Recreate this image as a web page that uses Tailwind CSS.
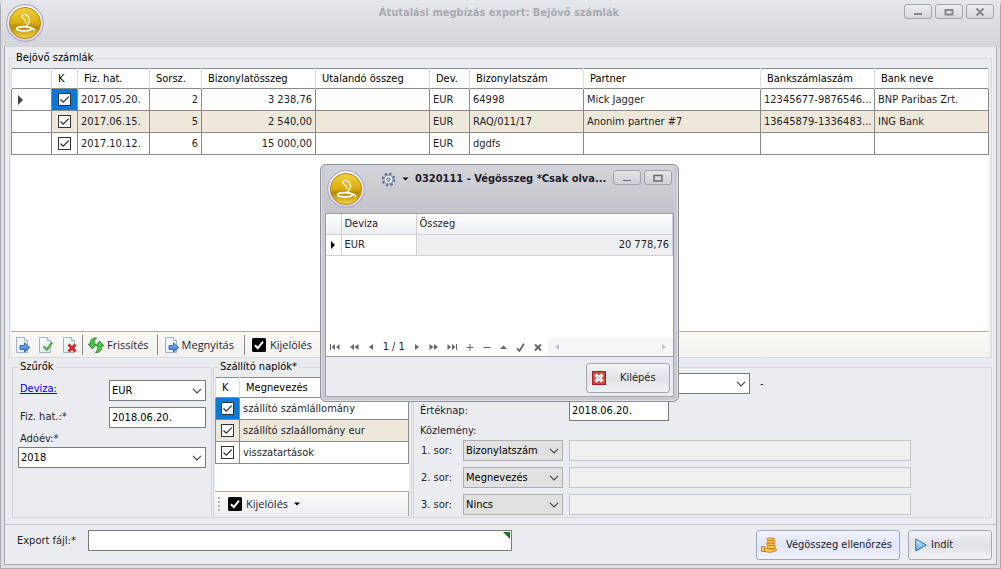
<!DOCTYPE html>
<html lang="hu">
<head>
<meta charset="utf-8">
<title>Átutalási megbízás export: Bejövő számlák</title>
<script src="https://cdn.jsdelivr.net/npm/@tailwindcss/browser@4"></script>
</head>
<body class="min-h-screen bg-[#d9dae0] font-['DejaVu_Sans_Condensed','DejaVu_Sans',sans-serif] text-[11px] leading-[14px] text-[#1e1e2c]">

<svg class="absolute size-0" aria-hidden="true">
  <defs>
    <linearGradient id="gold" x1="0" y1="0" x2="0" y2="1"><stop offset="0" stop-color="#f3cf3c"/><stop offset=".5" stop-color="#dcae0e"/><stop offset=".62" stop-color="#b58a00"/><stop offset="1" stop-color="#f2d54a"/></linearGradient>
    <linearGradient id="ring" x1="0" y1="0" x2="0" y2="1"><stop offset="0" stop-color="#ffffff"/><stop offset="1" stop-color="#d9d2e8"/></linearGradient>
    <linearGradient id="blue" x1="0" y1="0" x2="0" y2="1"><stop offset="0" stop-color="#8fc0f5"/><stop offset="1" stop-color="#2f6fc8"/></linearGradient>
    <linearGradient id="page" x1="0" y1="0" x2="1" y2="1"><stop offset="0" stop-color="#ffffff"/><stop offset="1" stop-color="#d8e2ee"/></linearGradient>
    <linearGradient id="sky" x1="0" y1="0" x2="0" y2="1"><stop offset="0" stop-color="#d3ecfc"/><stop offset="1" stop-color="#5aa9e6"/></linearGradient>
  </defs>
  <symbol id="logo" viewBox="0 0 38 38">
    <circle cx="19" cy="19" r="18.3" fill="url(#ring)" stroke="#b3a8cc" stroke-width="1.2"/>
    <circle cx="19" cy="19" r="15.6" fill="url(#gold)" stroke="#b08c14" stroke-width="1"/>
    <g fill="none" stroke="#fff" stroke-linecap="round"><path d="M19.500 22.500C24 19.500 24 16 22.500 13C20.500 9.500 16.500 9.500 15.500 12.500C17 15 20 15 20 19" stroke-width="1.100"/><ellipse cx="18" cy="24.800" rx="7.500" ry="2.200" stroke-width="1.600"/><path d="M25 24c2 0 3 .8 3.500 2.600" stroke-width="1.400"/></g>
  </symbol>
  <symbol id="tick" viewBox="0 0 13 13"><path d="M2.500 6.500 5.200 9.200 10.800 3.600" fill="none" stroke="#333" stroke-width="1.300"/></symbol>
  <symbol id="chev" viewBox="0 0 10 6"><path d="M1 .8 5 4.800 9 .8" fill="none" stroke="#444" stroke-width="1.200"/></symbol>
  <symbol id="doc" viewBox="0 0 16 16"><path d="M1.500.5h8l3 3v12h-11z" fill="url(#page)" stroke="#9fb0c4"/><path d="M9.500.5v3h3" fill="#fff" stroke="#9fb0c4"/></symbol>
  <symbol id="docopen" viewBox="0 0 16 16"><use href="#doc"/><path d="M5 8.500h4.500V5.800L14.800 10.500 9.500 15v-2.600H5z" fill="url(#blue)" stroke="#2458a8" stroke-width=".8"/></symbol>
  <symbol id="doccheck" viewBox="0 0 16 16"><use href="#doc"/><path d="M5.500 9.500 8.800 12.500 14.300 5.500" fill="none" stroke="#58b04c" stroke-width="2.400"/></symbol>
  <symbol id="docdel" viewBox="0 0 16 16"><use href="#doc"/><path d="M6.500 7.500l7 7M13.500 7.500l-7 7" stroke="#d02c2c" stroke-width="3"/></symbol>
  <symbol id="refresh" viewBox="0 0 16 16"><g fill="#4cc44a" stroke="#16801e" stroke-width=".8"><path d="M8.500 1C4.500.5 2 3 2.200 7H.3L4.300 12 8.300 7H6C6 4.500 6.800 2.500 8.500 1z"/><path d="M7.500 15.500c4 .5 6.500-2 6.300-6.500h1.900L11.700 4 7.700 9H10c0 2.500-.8 5-2.500 6.500z"/></g></symbol>
  <symbol id="blackcheck" viewBox="0 0 14 14"><rect width="14" height="14" rx="1.500"/><path d="M3 7.200 5.800 10.200 11 3.600" fill="none" stroke="#fff" stroke-width="2"/></symbol>
  <symbol id="caret" viewBox="0 0 6 4"><path d="M0 .5h6L3 3.500z"/></symbol>
</svg>

<div class="flex min-h-screen flex-col rounded-t-md border-x border-b border-[#a9aab2] bg-[#dddee3]">
  <header class="flex h-[47px] items-start bg-linear-to-b from-[#e6e7ea] to-[#d4d5da] pt-1 pr-1.5 pl-[5px]">
    <svg class="size-[38px] shrink-0"><use href="#logo"/></svg>
    <h1 class="grow pt-0.5 pl-[50px] text-center text-[11px] font-bold text-[#a9aab1]">Átutalási megbízás export: Bejövő számlák</h1>
    <div class="flex gap-[3px]">
      <button aria-label="Kis méret" class="flex h-[15px] w-7 items-center justify-center rounded-[3px] border border-[#a4a5ae] bg-linear-to-b from-[#ededf0] to-[#d8d9de]"><svg class="h-2 w-2.5" viewBox="0 0 10 8"><path d="M1 6h8" stroke="#85868c" stroke-width="2"/></svg></button>
      <button aria-label="Teljes méret" class="flex h-[15px] w-7 items-center justify-center rounded-[3px] border border-[#a4a5ae] bg-linear-to-b from-[#ededf0] to-[#d8d9de]"><svg class="h-2 w-2.5" viewBox="0 0 10 8"><path d="M1.500 2h7v4.500h-7z" fill="none" stroke="#85868c" stroke-width="2"/></svg></button>
      <button aria-label="Bezárás" class="flex h-[15px] w-7 items-center justify-center rounded-[3px] border border-[#a4a5ae] bg-linear-to-b from-[#ededf0] to-[#d8d9de]"><svg class="h-2 w-2.5" viewBox="0 0 10 8"><path d="M1.500.5l7 7M8.500.5l-7 7" stroke="#85868c" stroke-width="2"/></svg></button>
    </div>
  </header>

  <main class="mr-[3px] mb-[3px] ml-[3px] flex grow flex-col border-x border-b border-[#a9aab2] bg-[#ebecf0] pt-[11px]">
    <section class="mx-1 flex grow flex-col border border-[#d9dade]">
      <h2 class="-mt-2 ml-1 self-start bg-[#ebecf0] px-0.5 text-black">Bejövő számlák</h2>
      <div class="mt-[3px] mr-0.5 ml-px flex grow flex-col bg-white">
        <table class="w-full table-fixed border-collapse border-y border-[#8a8a8a]">
          <colgroup><col class="w-10"><col class="w-[26px]"><col class="w-[72px]"><col class="w-[52px]"><col class="w-[114px]"><col class="w-[114px]"><col class="w-10"><col class="w-[114px]"><col class="w-[177px]"><col class="w-[114px]"><col></colgroup>
          <thead>
            <tr class="h-5 text-left text-black *:border-x *:border-[#dcdcdc] *:px-1.5 *:font-normal *:whitespace-nowrap">
              <td></td><th>K</th><th>Fiz. hat.</th><th>Sorsz.</th><th>Bizonylatösszeg</th><th>Utalandó összeg</th><th>Dev.</th><th>Bizonylatszám</th><th>Partner</th><th>Bankszámlaszám</th><th>Bank neve</th>
            </tr>
          </thead>
          <tbody>
            <tr class="h-[22px] *:border *:border-[#8a8a8a] *:px-[3px] *:whitespace-nowrap">
              <td><svg class="ml-[3px] h-2.5 w-[5px]" viewBox="0 0 5 10"><path d="M0 0 5 5 0 10z" fill="#444"/></svg></td>
              <td class="bg-[#0a78d4]"><label class="mx-auto grid size-[13px]"><input type="checkbox" checked aria-label="64998 kijelölése" class="col-start-1 row-start-1 size-[13px] appearance-none border border-[#333] bg-white"><svg class="col-start-1 row-start-1 size-[13px]"><use href="#tick"/></svg></label></td>
              <td>2017.05.20.</td><td class="text-right">2</td><td class="text-right">3 238,76</td><td></td><td>EUR</td><td>64998</td><td>Mick Jagger</td><td>12345677-9876546...</td><td>BNP Paribas Zrt.</td>
            </tr>
            <tr class="h-[22px] bg-[#ede8d9] *:border *:border-[#8a8a8a] *:px-[3px] *:whitespace-nowrap">
              <td class="bg-white"></td>
              <td><label class="mx-auto grid size-[13px]"><input type="checkbox" checked aria-label="RAQ/011/17 kijelölése" class="col-start-1 row-start-1 size-[13px] appearance-none border border-[#333] bg-white"><svg class="col-start-1 row-start-1 size-[13px]"><use href="#tick"/></svg></label></td>
              <td>2017.06.15.</td><td class="text-right">5</td><td class="text-right">2 540,00</td><td></td><td>EUR</td><td>RAQ/011/17</td><td>Anonim partner #7</td><td>13645879-1336483...</td><td>ING Bank</td>
            </tr>
            <tr class="h-[22px] *:border *:border-[#8a8a8a] *:px-[3px] *:whitespace-nowrap">
              <td></td>
              <td><label class="mx-auto grid size-[13px]"><input type="checkbox" checked aria-label="dgdfs kijelölése" class="col-start-1 row-start-1 size-[13px] appearance-none border border-[#333] bg-white"><svg class="col-start-1 row-start-1 size-[13px]"><use href="#tick"/></svg></label></td>
              <td>2017.10.12.</td><td class="text-right">6</td><td class="text-right">15 000,00</td><td></td><td>EUR</td><td>dgdfs</td><td></td><td></td><td></td>
            </tr>
          </tbody>
        </table>
      </div>
      <div class="mr-0.5 ml-px flex h-[26px] items-center border-t border-[#b3ad98] bg-linear-to-b from-[#faf9f5] to-[#f3f2f0] pl-1 font-['Open_Sans','Noto_Sans',sans-serif] text-[11px] text-[#1e1e3c]">
        <button aria-label="Megnyitás" class="mr-[7px]"><svg class="size-4"><use href="#docopen"/></svg></button>
        <button aria-label="Elfogadás" class="mr-2"><svg class="size-4"><use href="#doccheck"/></svg></button>
        <button aria-label="Törlés" class="mr-1"><svg class="size-4"><use href="#docdel"/></svg></button>
        <button class="flex h-5 items-center gap-[3px] border-l border-[#8a8a8a] pr-2 pl-[5px]"><svg class="size-4"><use href="#refresh"/></svg>Frissítés</button>
        <button class="flex h-5 items-center gap-0.5 border-l border-[#8a8a8a] pr-2.5 pl-1.5"><svg class="size-4"><use href="#docopen"/></svg>Megnyitás</button>
        <button class="flex h-5 items-center gap-1 border-l border-[#8a8a8a] pl-[7px]"><svg class="size-3.5"><use href="#blackcheck"/></svg>Kijelölés<svg class="ml-1 h-1 w-1.5"><use href="#caret"/></svg></button>
      </div>
    </section>

    <div class="mx-1 mt-0.5 mb-1.5 flex h-[158px] gap-px pl-[3px]">
      <fieldset class="w-[200px] shrink-0 border border-[#d6d7dc] px-[5px]">
        <legend class="px-0.5 text-black">Szűrők</legend>
        <div class="mt-1.5 grid grid-cols-[91px_1fr] gap-y-1.5">
          <a href="#deviza" class="pt-0.5 pl-0.5 text-[#0000e0] underline">Deviza:</a>
          <div class="relative"><select id="deviza" aria-label="Deviza" class="h-[21px] w-full appearance-none border border-[#7a7a7a] bg-white px-0.5 text-black"><option>EUR</option></select><svg class="pointer-events-none absolute top-2 right-1 h-1.5 w-2.5"><use href="#chev"/></svg></div>
          <label for="fizhat" class="pt-[3px] pl-0.5">Fiz. hat.:*</label>
          <input id="fizhat" value="2018.06.20." class="h-[21px] w-full border border-[#7a7a7a] bg-white px-0.5 text-black">
        </div>
        <label for="adoev" class="mt-1 mb-px block pl-0.5">Adóév:*</label>
        <div class="relative"><select id="adoev" class="h-[21px] w-full appearance-none border border-[#7a7a7a] bg-white px-0.5 text-black"><option>2018</option></select><svg class="pointer-events-none absolute top-2 right-1 h-1.5 w-2.5"><use href="#chev"/></svg></div>
      </fieldset>

      <fieldset class="w-[199px] shrink-0 border border-[#d6d7dc] pr-0.5 pl-px">
        <legend class="ml-[3px] px-0.5 text-black">Szállító naplók*</legend>
        <div class="mt-[3px] h-[114px] bg-white">
          <table class="w-full table-fixed border-collapse border border-[#8a8a8a]">
            <colgroup><col class="w-6"><col></colgroup>
            <thead><tr class="h-5 text-left text-black *:border-x *:border-[#dcdcdc] *:px-1.5 *:font-normal"><th>K</th><th>Megnevezés</th></tr></thead>
            <tbody>
              <tr class="h-[22px] *:border *:border-[#8a8a8a] *:px-[3px]"><td class="bg-[#0a78d4]"><label class="mx-auto grid size-[13px]"><input type="checkbox" checked aria-label="szállító számlállomány" class="col-start-1 row-start-1 size-[13px] appearance-none border border-[#333] bg-white"><svg class="col-start-1 row-start-1 size-[13px]"><use href="#tick"/></svg></label></td><td>szállító számlállomány</td></tr>
              <tr class="h-[22px] bg-[#ede8d9] *:border *:border-[#8a8a8a] *:px-[3px]"><td><label class="mx-auto grid size-[13px]"><input type="checkbox" checked aria-label="szállító szlaállomány eur" class="col-start-1 row-start-1 size-[13px] appearance-none border border-[#333] bg-white"><svg class="col-start-1 row-start-1 size-[13px]"><use href="#tick"/></svg></label></td><td>szállító szlaállomány eur</td></tr>
              <tr class="h-[22px] *:border *:border-[#8a8a8a] *:px-[3px]"><td><label class="mx-auto grid size-[13px]"><input type="checkbox" checked aria-label="visszatartások" class="col-start-1 row-start-1 size-[13px] appearance-none border border-[#333] bg-white"><svg class="col-start-1 row-start-1 size-[13px]"><use href="#tick"/></svg></label></td><td>visszatartások</td></tr>
            </tbody>
          </table>
        </div>
        <div class="flex h-[25px] items-center border-t border-r border-[#b3ad98] border-r-[#a4a5ae] bg-linear-to-b from-[#fbfbfb] to-[#eeeff1] pl-[3px] font-['Open_Sans','Noto_Sans',sans-serif] text-[11px] text-[#1e1e3c]">
          <span class="mr-2 h-3.5 border-l-2 border-dotted border-[#b4b4b8]"></span>
          <button class="flex items-center gap-1"><svg class="size-3.5"><use href="#blackcheck"/></svg>Kijelölés<svg class="ml-0.5 h-1 w-1.5"><use href="#caret"/></svg></button>
        </div>
      </fieldset>

      <div role="group" aria-label="Utalás" class="mt-[7px] grow border border-[#d6d7dc] pt-[5px] pr-20 pl-1.5">
        <div class="grid grid-cols-[37px_100px_1fr] items-center gap-x-1.5 gap-y-1.5">
          <span class="col-span-2"></span>
          <div class="flex items-center gap-2.5"><div class="relative w-[181px]"><select aria-label="Bankszámla" class="h-[21px] w-full appearance-none border border-[#7a7a7a] bg-white px-1"><option></option></select><svg class="pointer-events-none absolute top-2 right-1 h-1.5 w-2.5"><use href="#chev"/></svg></div><span>-</span></div>
          <label for="erteknap" class="col-span-2">Értéknap:</label>
          <input id="erteknap" value="2018.06.20." class="h-[21px] w-[100px] border border-[#7a7a7a] bg-white px-0.5 text-black">
        </div>
        <div class="mt-[3px]">Közlemény:</div>
        <div class="mt-0.5 grid grid-cols-[37px_100px_1fr] items-center gap-x-1.5 gap-y-1.5">
          <label for="sor1" class="pl-px">1. sor:</label>
          <div class="relative"><select id="sor1" class="h-[21px] w-full appearance-none border border-[#adadad] bg-[#e1e1e1] px-0.5 text-black"><option>Bizonylatszám</option></select><svg class="pointer-events-none absolute top-2 right-1 h-1.5 w-2.5"><use href="#chev"/></svg></div>
          <input aria-label="1. sor szövege" class="h-[21px] w-full border border-[#c6c6ca] bg-[#f0f0f0]" disabled>
          <label for="sor2" class="pl-px">2. sor:</label>
          <div class="relative"><select id="sor2" class="h-[21px] w-full appearance-none border border-[#adadad] bg-[#e1e1e1] px-0.5 text-black"><option>Megnevezés</option></select><svg class="pointer-events-none absolute top-2 right-1 h-1.5 w-2.5"><use href="#chev"/></svg></div>
          <input aria-label="2. sor szövege" class="h-[21px] w-full border border-[#c6c6ca] bg-[#f0f0f0]" disabled>
          <label for="sor3" class="pl-px">3. sor:</label>
          <div class="relative"><select id="sor3" class="h-[21px] w-full appearance-none border border-[#adadad] bg-[#e1e1e1] px-0.5 text-black"><option>Nincs</option></select><svg class="pointer-events-none absolute top-2 right-1 h-1.5 w-2.5"><use href="#chev"/></svg></div>
          <input aria-label="3. sor szövege" class="h-[21px] w-full border border-[#c6c6ca] bg-[#f0f0f0]" disabled>
        </div>
      </div>
    </div>

    <footer class="flex h-10 items-start border-t border-[#c4c5cc] pt-[5px] pl-3">
      <label for="export" class="mt-1 w-[71px]">Export fájl:*</label>
      <div class="relative w-[424px]"><input id="export" class="h-[21px] w-full border border-[#7a7a7a] bg-white px-1"><svg class="pointer-events-none absolute top-0.5 right-0.5 size-[7px]" viewBox="0 0 7 7"><path d="M0 0h7v7z" fill="#0b7a1e"/></svg></div>
      <button class="ml-auto flex h-[30px] w-[144px] items-center gap-2 rounded-[3px] border border-[#9ea6c4] bg-linear-to-b from-[#f2f5ff] via-[#dfe5fb] to-[#f2f5ff] pl-1 whitespace-nowrap"><svg class="size-[17px] shrink-0" viewBox="0 0 17 17"><g fill="#fbc84c" stroke="#c9791a" stroke-width=".9"><path d="M.5 9.500h3v5h-3z"/><path d="M3.500 11.500c2-1 3 0 5 .5h6.500c1.500 0 1.500 1 .5 1.500l-4 1.500c-3 .8-5 0-8-.5z"/><rect x="6.500" y="8.500" width="8" height="3" rx="1.500"/><rect x="5.500" y="6" width="8" height="2.500" rx="1.200"/><rect x="6.500" y="3.500" width="7.500" height="2.500" rx="1.200"/><rect x="6" y="1" width="7.500" height="2.500" rx="1.200"/></g></svg>Végösszeg ellenőrzés</button>
      <button class="mr-1 ml-2 flex h-[30px] w-[84px] items-center gap-1 rounded-[3px] border border-[#a6a7b4] bg-linear-to-b from-[#f1f2f5] via-[#e0e1e6] to-[#f1f2f5] pl-1.5"><svg class="h-3.5 w-3" viewBox="0 0 12 14"><path d="M.8 1 11.200 7 .8 13z" fill="url(#sky)" stroke="#2c6cb0"/></svg>Indít</button>
    </footer>
  </main>
</div>

<section role="dialog" aria-label="0320111 - Végösszeg" class="absolute top-[164px] left-[320px] flex h-[238px] w-[359px] flex-col rounded-md border border-[#8e8f98] bg-[#c9cad0] px-1 pb-1 shadow-[inset_0_0_0_1px_#dfe0e5]">
  <div class="flex h-12 items-start bg-linear-to-b from-[#d4d5da] to-[#c3c4cb] pt-[5px] pr-0.5 pl-0.5">
    <svg class="size-[38px] shrink-0"><use href="#logo"/></svg>
    <svg class="mt-0.5 ml-4 size-[15px] shrink-0" viewBox="0 0 16 16"><g fill="none" stroke="#5a6a8a"><circle cx="8" cy="8" r="6.300" stroke-width="2" stroke-dasharray="2.500 2.448"/><circle cx="8" cy="8" r="4.800" fill="#eef2f8" stroke-width=".9"/><circle cx="8" cy="8" r="1.900" fill="#c9cad0"/></g></svg>
    <svg class="mt-[7px] ml-1.5 h-1 w-[7px] shrink-0"><use href="#caret"/></svg>
    <h2 class="ml-1.5 grow pt-0.5 text-[11px] font-bold whitespace-nowrap">0320111 - Végösszeg *Csak olva...</h2>
    <button aria-label="Kis méret" class="mr-[3px] flex h-[15px] w-7 shrink-0 items-center justify-center rounded-[3px] border border-[#a0a1ac] bg-linear-to-b from-[#e4e4e9] to-[#cfd0d6]"><svg class="h-2 w-2.5" viewBox="0 0 10 8"><path d="M1 6.500h8" stroke="#6d6e75"/></svg></button>
    <button aria-label="Teljes méret" class="flex h-[15px] w-7 shrink-0 items-center justify-center rounded-[3px] border border-[#a0a1ac] bg-linear-to-b from-[#e4e4e9] to-[#cfd0d6]"><svg class="h-2 w-2.5" viewBox="0 0 10 8"><path d="M1 1.500h8v5.500h-8z" fill="none" stroke="#6d6e75" stroke-width="1.500"/></svg></button>
  </div>
  <div class="flex grow flex-col border border-[#9a9ba5] bg-white">
    <table class="w-full table-fixed border-collapse">
      <colgroup><col class="w-[15px]"><col class="w-[75px]"><col></colgroup>
      <thead><tr class="h-5 bg-linear-to-b from-white to-[#eceef2] text-left *:border-r *:border-b *:border-[#cfd0d6] *:px-[3px] *:font-normal"><td></td><th>Deviza</th><th>Összeg</th></tr></thead>
      <tbody><tr class="h-[21px] *:border-r *:border-b *:border-[#cfd0d6] *:px-[3px]"><td><svg class="ml-0.5 h-2 w-1" viewBox="0 0 4 8"><path d="M0 0 4 4 0 8z"/></svg></td><td>EUR</td><td class="bg-[#efeff1] text-right">20 778,76</td></tr></tbody>
    </table>
    <div class="mt-auto flex h-[18px] items-center text-[#666]">
      <div class="flex h-full w-[222px] items-center justify-between pr-1.5 pl-1">
        <button aria-label="Első"><svg class="h-2 w-2.5" viewBox="0 0 10 8" fill="currentColor"><path d="M0 1h1v6H0zM5 1v6L1.500 4zM9.500 1v6L6 4z"/></svg></button>
        <button aria-label="Előző lap"><svg class="h-2 w-2.5" viewBox="0 0 10 8" fill="currentColor"><path d="M5 1v6L1 4zM9.500 1v6L5.500 4z"/></svg></button>
        <button aria-label="Előző"><svg class="h-2 w-1.5" viewBox="0 0 6 8" fill="currentColor"><path d="M5 1v6L1 4z"/></svg></button>
        <span class="text-[#1e1e2c]">1 / 1</span>
        <button aria-label="Következő"><svg class="h-2 w-1.5" viewBox="0 0 6 8" fill="currentColor"><path d="M1 1v6l4-3z"/></svg></button>
        <button aria-label="Következő lap"><svg class="h-2 w-2.5" viewBox="0 0 10 8" fill="currentColor"><path d="M.5 1v6l4-3zM5 1v6l4-3z"/></svg></button>
        <button aria-label="Utolsó"><svg class="h-2 w-2.5" viewBox="0 0 10 8" fill="currentColor"><path d="M.5 1v6L4 4zM5 1v6l3.500-3zM9 1h1v6H9z"/></svg></button>
        <button aria-label="Hozzáadás"><svg class="size-2" viewBox="0 0 8 8" stroke="currentColor"><path d="M.5 4.500h7M4 1v7"/></svg></button>
        <button aria-label="Eltávolítás"><svg class="size-2" viewBox="0 0 8 8" stroke="currentColor"><path d="M.5 4.500h7"/></svg></button>
        <button aria-label="Szerkesztés"><svg class="h-2 w-[7px]" viewBox="0 0 7 8" fill="currentColor"><path d="M0 6h7L3.500 2.500z"/></svg></button>
        <button aria-label="Mentés"><svg class="size-[9px]" viewBox="0 0 9 9" fill="none" stroke="currentColor" stroke-width="1.800"><path d="M1 5.500 3.500 8 8 .8"/></svg></button>
        <button aria-label="Mégse"><svg class="size-2" viewBox="0 0 8 8" stroke="currentColor" stroke-width="2"><path d="M1 1.500l6 6M7 1.500l-6 6"/></svg></button>
      </div>
      <div class="flex h-full grow items-center justify-between bg-[#f6f6f8] px-1.5 text-[#c3c4ca]"><svg class="h-2 w-1.5" viewBox="0 0 6 8" fill="currentColor"><path d="M5 1v6L1 4z"/></svg><svg class="h-2 w-1.5" viewBox="0 0 6 8" fill="currentColor"><path d="M1 1v6l4-3z"/></svg></div>
    </div>
  </div>
  <div class="flex h-10 justify-end border-x border-b border-[#a4a5ae] bg-[#ebecf0] pt-1.5 pr-[3px]">
    <button class="flex h-[30px] w-[84px] items-center gap-3.5 rounded-[3px] border border-[#a6a7b4] bg-linear-to-b from-[#f4f5f7] via-[#e1e2e7] to-[#f1f2f5] pl-[5px]"><svg class="size-3.5" viewBox="0 0 14 14"><rect x=".5" y=".5" width="13" height="13" fill="#d8453f" stroke="#a81e1e"/><path d="M3.500 3.500l7 7M10.500 3.500l-7 7" stroke="#fff" stroke-width="3.400"/><path d="M4.500 4.500l5 5M9.500 4.500l-5 5" stroke="#e8b4c0" stroke-width="1"/></svg>Kilépés</button>
  </div>
</section>
</body>
</html>
